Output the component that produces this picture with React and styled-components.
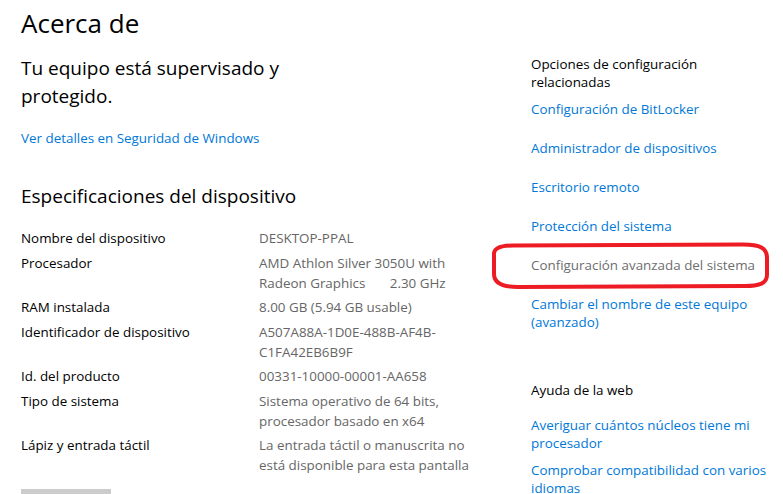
import React from 'react'
import styled, { createGlobalStyle } from 'styled-components'

const GlobalStyle = createGlobalStyle`
  html, body {
    margin: 0;
    padding: 0;
    overflow: hidden;
    background: #ffffff;
  }
  body {
    font-family: "Open Sans", "Noto Sans", sans-serif;
    color: #000;
  }
`

const specs = [
  { label: 'Nombre del dispositivo', value: ['DESKTOP-PPAL'] },
  { label: 'Procesador', value: ['AMD Athlon Silver 3050U with', 'Radeon Graphics\u00a0\u00a0\u00a0\u00a0\u00a0\u00a0 2.30 GHz'] },
  { label: 'RAM instalada', value: ['8.00 GB (5.94 GB usable)'] },
  { label: 'Identificador de dispositivo', value: ['A507A88A-1D0E-488B-AF4B-', 'C1FA42EB6B9F'] },
  { label: 'Id. del producto', value: ['00331-10000-00001-AA658'] },
  { label: 'Tipo de sistema', value: ['Sistema operativo de 64 bits,', 'procesador basado en x64'] },
  { label: 'Lápiz y entrada táctil', value: ['La entrada táctil o manuscrita no', 'está disponible para esta pantalla'] },
]

const related = [
  { text: 'Configuración de BitLocker' },
  { text: 'Administrador de dispositivos' },
  { text: 'Escritorio remoto' },
  { text: 'Protección del sistema' },
  { text: 'Configuración avanzada del sistema', muted: true },
  { text: ['Cambiar el nombre de este equipo', '(avanzado)'] },
]

const webHelp = [
  ['Averiguar cuántos núcleos tiene mi', 'procesador'],
  ['Comprobar compatibilidad con varios', 'idiomas'],
]

const lines = (t) =>
  [].concat(t).map((l, i) => (
    <React.Fragment key={i}>
      {i > 0 && <br />}
      {l}
    </React.Fragment>
  ))

const App = () => {
  return (
    <>
      <GlobalStyle />
      <Page>
        <Main>
          <Title>Acerca de</Title>
          <Subtitle $top={15}>Tu equipo está supervisado y<br />protegido.</Subtitle>
          <MainLink>Ver detalles en Seguridad de Windows</MainLink>
          <Subtitle $top={34}>Especificaciones del dispositivo</Subtitle>
          <SpecList>
            {specs.map((s) => (
              <SpecRow key={s.label}>
                <Label>{s.label}</Label>
                <Value>{lines(s.value)}</Value>
              </SpecRow>
            ))}
          </SpecList>
          <CopyButton />
        </Main>

        <Side>
          <SideHeading>Opciones de configuración<br />relacionadas</SideHeading>
          <LinkList $first={9} $gap={21}>
            {related.map((r, i) => (
              <SideLink key={i} $muted={r.muted}>{lines(r.text)}</SideLink>
            ))}
          </LinkList>
          <SideHeading $top={50}>Ayuda de la web</SideHeading>
          <LinkList $first={17} $gap={9}>
            {webHelp.map((t, i) => (
              <SideLink key={i}>{lines(t)}</SideLink>
            ))}
          </LinkList>
        </Side>

        <Marker viewBox="0 0 285 52" width="285" height="52">
          <path
            d="M25 5.5 L255 4.5 C272 4.5 279 8 279 18 L279 35 C279 44 270 46 257 46 L30 47 C12 47 6 42 6 34 L6 14 C6 8 12 5.5 25 5.5 Z"
            fill="none"
            stroke="#ed1c24"
            strokeWidth="4"
          />
        </Marker>
      </Page>
    </>
  )
}

export default App

const Page = styled.div`
  position: relative;
  display: flex;
  width: 783px;
  height: 494px;
  padding-left: 21px;
  box-sizing: border-box;
`

const Main = styled.div`
  width: 510px;
  flex-shrink: 0;
  padding-top: 7px;
`

const Title = styled.h1`
  margin: 0;
  font-size: 26px;
  font-weight: 400;
  line-height: 32px;
  color: #000;
`

const Subtitle = styled.h2`
  margin: ${(p) => p.$top}px 0 0;
  font-size: 19px;
  font-weight: 400;
  line-height: 28px;
  color: #000;
`

const MainLink = styled.div`
  margin-top: 18px;
  font-size: 13.4px;
  line-height: 20px;
  color: #0078d7;
`

const SpecList = styled.div`
  margin-top: 18px;
  display: flex;
  flex-direction: column;
  gap: 4.5px;
`

const SpecRow = styled.div`
  display: grid;
  grid-template-columns: 238px 1fr;
  font-size: 13.4px;
  line-height: 20px;
`

const Label = styled.div`
  color: #000;
`

const Value = styled.div`
  color: #666;
  white-space: nowrap;
`

const CopyButton = styled.div`
  margin-top: 14px;
  width: 90px;
  height: 32px;
  background: #cccccc;
`

const Side = styled.div`
  padding-top: 55px;
  flex: 1;
`

const SideHeading = styled.div`
  margin-top: ${(p) => p.$top || 0}px;
  font-size: 13.4px;
  line-height: 18px;
  color: #000;
`

const LinkList = styled.div`
  display: flex;
  flex-direction: column;
  gap: ${(p) => p.$gap}px;
  margin-top: ${(p) => p.$first}px;
`

const SideLink = styled.div`
  font-size: 13.4px;
  line-height: 18px;
  white-space: nowrap;
  color: ${(p) => (p.$muted ? '#6e6e6e' : '#0078d7')};
`

const Marker = styled.svg`
  position: absolute;
  left: 488px;
  top: 240px;
  pointer-events: none;
`
